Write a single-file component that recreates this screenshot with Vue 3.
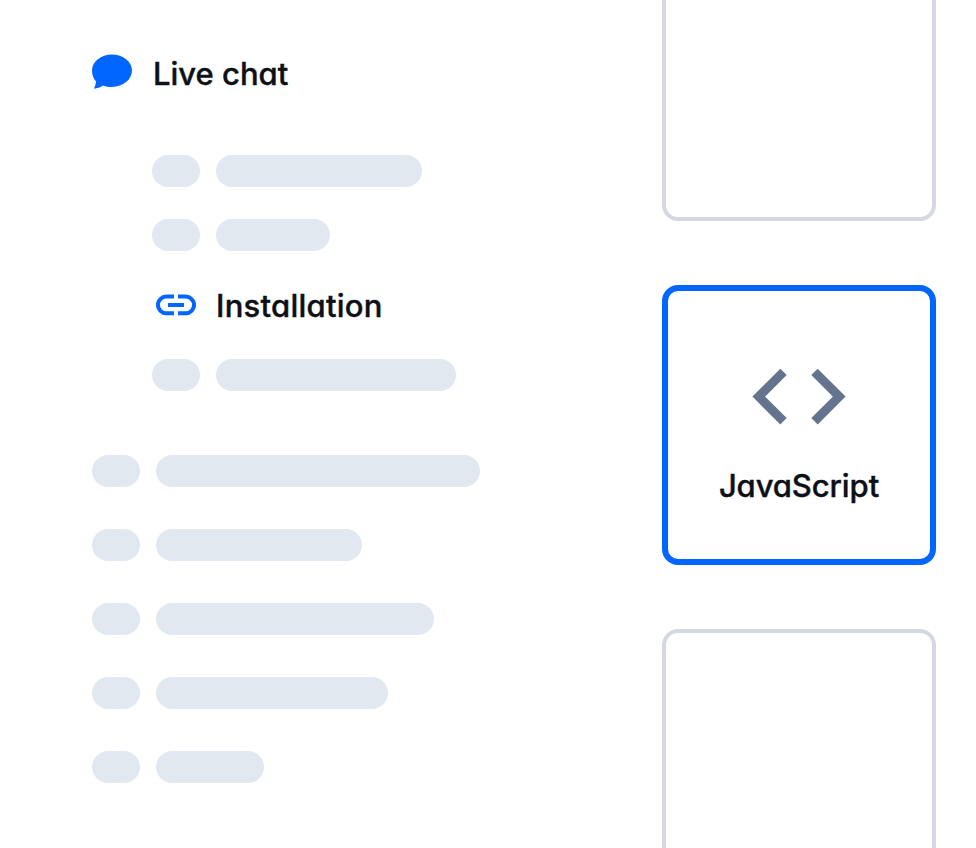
<script setup>
const subTop = [206, 114]
const subBottom = [240]
const sections = [324, 206, 278, 232, 108]
</script>

<template>
  <main class="page">
    <nav class="menu">
      <div class="heading">
        <svg class="chat-icon" viewBox="0 0 40 36">
          <path d="M20 .5C31 .5 40 7.6 40 16.6S31 33 20 33c-3.200 0-6.200-.6-8.900-1.600C8.500 33.200 5.200 34.300 1.900 34.700c1-2.200 1.900-4.600 2.100-7.200C1.500 24.800 0 20.900 0 16.600 0 7.600 9 .5 20 .5Z" />
        </svg>
        <span class="label chat-label">Live chat</span>
      </div>
      <div class="submenu">
        <div v-for="(w, i) in subTop" :key="'t' + i" class="row">
          <i class="pill dot"></i><i class="pill" :style="{ width: w + 'px' }"></i>
        </div>
        <div class="active">
          <svg class="link-icon" viewBox="0 0 40 22">
            <path d="M18 2.600H10.300a8.300 8.300 0 0 0 0 16.700H18M22 2.600h7.700a8.300 8.300 0 0 1 0 16.700H22M12 11h16" />
          </svg>
          <span class="label install-label">Installation</span>
        </div>
        <div v-for="(w, i) in subBottom" :key="'b' + i" class="row">
          <i class="pill dot"></i><i class="pill" :style="{ width: w + 'px' }"></i>
        </div>
      </div>
      <div class="sections">
        <div v-for="(w, i) in sections" :key="i" class="row">
          <i class="pill dot"></i><i class="pill" :style="{ width: w + 'px' }"></i>
        </div>
      </div>
    </nav>
    <section class="cards">
      <div class="card"></div>
      <div class="card selected">
        <svg class="code-icon" viewBox="0 0 94 56">
          <path d="M31.500 2.900 6.800 27.600l24.700 24.700M62.500 2.900l24.700 24.700-24.700 24.700" />
        </svg>
        <span class="label js-label">JavaScript</span>
      </div>
      <div class="card"></div>
    </section>
  </main>
</template>

<style>
body { margin: 0; background: #fff; }
</style>

<style scoped>
.page {
  box-sizing: border-box;
  width: 976px;
  height: 848px;
  padding: 0 40px 0 92px;
  display: flex;
  justify-content: space-between;
  overflow: hidden;
  background: #fff;
  color: #0d1117;
  font-family: Inter, "Liberation Sans", sans-serif;
}
.menu { padding-top: 54px; }
.heading { display: flex; height: 40px; gap: 21px; }
.chat-icon { width: 40px; height: 36px; fill: #06f; }
.label {
  font-size: 31px;
  line-height: 40px;
  font-weight: 500;
  font-feature-settings: "cv11" 1;
  -webkit-text-stroke: 0.4px currentColor;
  white-space: nowrap;
}
.install-label { letter-spacing: 0.25px; padding-top: 2px; }
.js-label { letter-spacing: -0.1px; }
.submenu {
  padding: 60.600px 0 0 60px;
  display: flex;
  flex-direction: column;
  gap: 32px;
}
.row { display: flex; gap: 16px; height: 32px; }
.pill { display: block; height: 32px; border-radius: 16px; background: #e2e8f0; }
.dot { width: 48px; }
.active { display: flex; align-items: center; height: 44px; gap: 20px; padding-left: 4px; }
.link-icon { width: 40px; height: 22px; fill: none; stroke: #06f; stroke-width: 4; }
.sections {
  margin-top: 64px;
  display: flex;
  flex-direction: column;
  gap: 42px;
}
.cards { display: flex; flex-direction: column; gap: 64px; margin-top: -59.400px; }
.card {
  box-sizing: border-box;
  flex: none;
  width: 274px;
  height: 280px;
  border: 4px solid #d5d8e3;
  border-radius: 16px;
}
.selected {
  display: flex;
  flex-direction: column;
  align-items: center;
  gap: 41px;
  padding-top: 78px;
  border: 6px solid #06f;
}
.code-icon { width: 94px; height: 56px; flex: none; fill: none; stroke: #64748f; stroke-width: 9; }
</style>
